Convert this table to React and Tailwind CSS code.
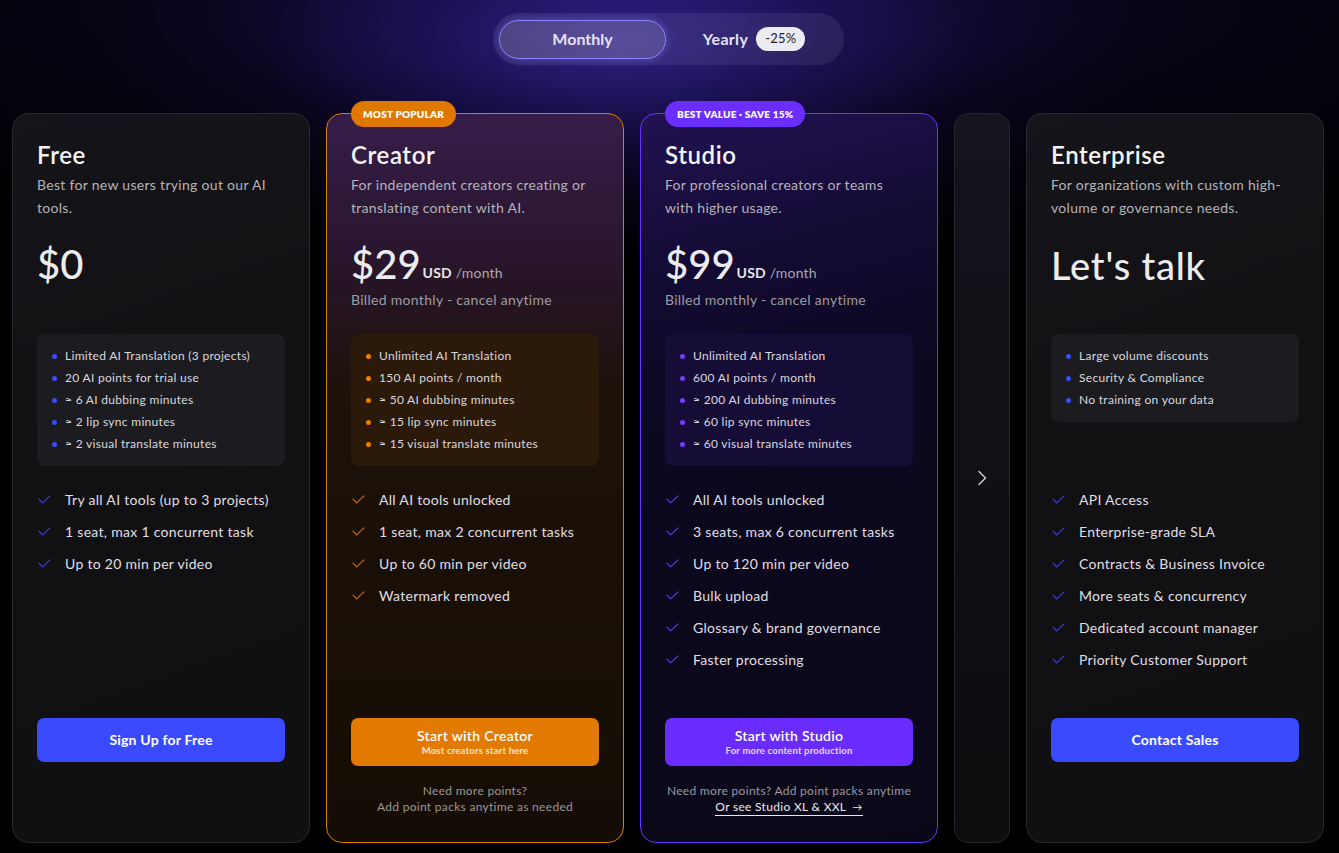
import React from "react";

const Check = ({ color }) => (
  <svg width="13" height="9" viewBox="0 0 13 9" fill="none" className="shrink-0">
    <path d="M1 4.2 L4.6 7.8 L12 0.8" stroke={color} strokeWidth="1.1" strokeLinecap="round" strokeLinejoin="round" />
  </svg>
);

const plans = [
  {
    key: "free",
    title: "Free",
    desc: "Best for new users trying out our AI tools.",
    price: "$0",
    billed: "",
    box: [
      "Limited AI Translation (3 projects)",
      "20 AI points for trial use",
      "≈ 6 AI dubbing minutes",
      "≈ 2 lip sync minutes",
      "≈ 2 visual translate minutes",
    ],
    checks: ["Try all AI tools (up to 3 projects)", "1 seat, max 1 concurrent task", "Up to 20 min per video"],
  },
  {
    key: "creator",
    title: "Creator",
    desc: "For independent creators creating or translating content with AI.",
    price: "$29",
    billed: "Billed monthly - cancel anytime",
    box: [
      "Unlimited AI Translation",
      "150 AI points / month",
      "≈ 50 AI dubbing minutes",
      "≈ 15 lip sync minutes",
      "≈ 15 visual translate minutes",
    ],
    checks: ["All AI tools unlocked", "1 seat, max 2 concurrent tasks", "Up to 60 min per video", "Watermark removed"],
  },
  {
    key: "studio",
    title: "Studio",
    desc: "For professional creators or teams with higher usage.",
    price: "$99",
    billed: "Billed monthly - cancel anytime",
    box: [
      "Unlimited AI Translation",
      "600 AI points / month",
      "≈ 200 AI dubbing minutes",
      "≈ 60 lip sync minutes",
      "≈ 60 visual translate minutes",
    ],
    checks: [
      "All AI tools unlocked",
      "3 seats, max 6 concurrent tasks",
      "Up to 120 min per video",
      "Bulk upload",
      "Glossary & brand governance",
      "Faster processing",
    ],
  },
];

const themes = {
  free: {
    card: "border-[#29292d] bg-[linear-gradient(160deg,#15141a_0%,#111113_40%,#101012_100%)]",
    box: "bg-[#1c1c20]",
    dot: "bg-[#3b4bff]",
    check: "#3446e8",
  },
  creator: {
    card: "border-[#e07a00] bg-[linear-gradient(180deg,#361d49_0%,#2a1630_18%,#1d1109_38%,#150d05_100%)]",
    box: "bg-[#2b1a0a]",
    dot: "bg-[#ea8000]",
    check: "#cf7000",
  },
  studio: {
    card: "border-[#6633ff] bg-[linear-gradient(165deg,#221252_0%,#140b35_20%,#0c0820_40%,#0a0818_100%)]",
    box: "bg-[#160d36]",
    dot: "bg-[#7a3cff]",
    check: "#6a35ff",
  },
};

function BoxList({ items, t }) {
  return (
    <div className={`mt-[24px] rounded-[8px] pl-[15px] pr-[10px] py-[11px] ${t.box}`}>
      {items.map((b) => (
        <div key={b} className="flex items-center gap-[8px] h-[22px] text-[12px] tracking-[0.3px] text-[#d9d8de]">
          <span className={`w-[5px] h-[5px] rounded-full shrink-0 ${t.dot}`} />
          <span>{b}</span>
        </div>
      ))}
    </div>
  );
}

function CheckList({ items, t, mt }) {
  return (
    <div className={`${mt} flex-1`}>
      {items.map((c) => (
        <div key={c} className="flex items-center h-[32px] text-[14px] tracking-[0.3px] text-[#e0dfe4]">
          <span className="w-[28px] pl-[1px]">
            <Check color={t.check} />
          </span>
          <span>{c}</span>
        </div>
      ))}
    </div>
  );
}

function Card({ plan }) {
  const t = themes[plan.key];
  return (
    <div className={`relative w-[298px] h-[730px] shrink-0 rounded-[16px] border px-6 pt-[26px] flex flex-col ${t.card}`}>
      {plan.key === "creator" && (
        <div className="absolute -top-[13px] left-6 h-[26px] px-3 rounded-full bg-[#e07800] flex items-center text-[10px] font-extrabold tracking-[0.2px] text-white">
          MOST POPULAR
        </div>
      )}
      {plan.key === "studio" && (
        <div className="absolute -top-[13px] left-6 h-[26px] px-3 rounded-full bg-[#6a2fff] flex items-center text-[10px] font-extrabold tracking-[0.2px] text-white">
          BEST VALUE · SAVE 15%
        </div>
      )}
      <div className="text-[24px] leading-[30px] font-semibold tracking-[0.6px] text-[#f4f4f6]">{plan.title}</div>
      <div className="mt-[3px] h-[46px] text-[14px] leading-[23px] tracking-[0.3px] text-[#b4b3b8] pr-3">{plan.desc}</div>
      <div className="mt-[23px] h-[48px] flex items-end gap-[2px] pb-[2px]">
        <span className="text-[40px] leading-[48px] font-medium text-[#ececee]">{plan.price}</span>
        {plan.price !== "$0" && (
          <span className="text-[14px] leading-[30px] tracking-[0.2px] text-[#a9a8ae]">
            <span className="font-bold text-[#e6e6e8]">USD</span> /month
          </span>
        )}
      </div>
      <div className="h-[20px] text-[14px] leading-[20px] tracking-[0.3px] text-[#9d9ca2]">{plan.billed}</div>
      <BoxList items={plan.box} t={t} />
      <CheckList items={plan.checks} t={t} mt="mt-[17px]" />
      <div className="h-[124px]">
        {plan.key === "free" && (
          <button className="w-full h-[44px] rounded-[7px] bg-[#3a4bff] text-white text-[14px] font-bold tracking-[0.2px] pb-[1px]">
            Sign Up for Free
          </button>
        )}
        {plan.key === "creator" && (
          <>
            <button className="w-full h-[48px] rounded-[7px] bg-[#e27a00] text-white flex flex-col items-center justify-center">
              <span className="text-[14px] leading-[17px] font-semibold tracking-[0.3px]">Start with Creator</span>
              <span className="text-[9.5px] leading-[13px] font-bold tracking-[0.2px] text-white/80">Most creators start here</span>
            </button>
            <div className="mt-[17px] text-center text-[12px] leading-[16px] tracking-[0.3px] text-[#9a9797]">
              <div>Need more points?</div>
              <div>Add point packs anytime as needed</div>
            </div>
          </>
        )}
        {plan.key === "studio" && (
          <>
            <button className="w-full h-[48px] rounded-[7px] bg-[#6a2bff] text-white flex flex-col items-center justify-center">
              <span className="text-[14px] leading-[17px] font-semibold tracking-[0.3px]">Start with Studio</span>
              <span className="text-[9.5px] leading-[13px] font-bold tracking-[0.2px] text-white/80">For more content production</span>
            </button>
            <div className="mt-[17px] text-center text-[12px] leading-[16px] tracking-[0.3px] text-[#9a99a0]">
              <div>Need more points? Add point packs anytime</div>
              <div className="flex justify-center">
                <span className="border-b border-[#e8e8ec] text-[#ececf0] leading-[15px]">
                  Or see Studio XL &amp; XXL <span className="ml-[3px] text-[10px]">→</span>
                </span>
              </div>
            </div>
          </>
        )}
      </div>
    </div>
  );
}

function Enterprise() {
  const t = themes.free;
  const box = ["Large volume discounts", "Security & Compliance", "No training on your data"];
  const checks = [
    "API Access",
    "Enterprise-grade SLA",
    "Contracts & Business Invoice",
    "More seats & concurrency",
    "Dedicated account manager",
    "Priority Customer Support",
  ];
  return (
    <div className={`w-[298px] h-[730px] shrink-0 rounded-[16px] border px-6 pt-[26px] flex flex-col ${t.card}`}>
      <div className="text-[24px] leading-[30px] font-semibold tracking-[0.6px] text-[#f4f4f6]">Enterprise</div>
      <div className="mt-[3px] h-[46px] text-[14px] leading-[23px] tracking-[0.3px] text-[#b4b3b8] pr-1">
        For organizations with custom high-volume or governance needs.
      </div>
      <div className="mt-[23px] h-[48px] flex items-end pb-[1px]">
        <span className="text-[38px] leading-[48px] font-medium tracking-[0.8px] text-[#ececee]">Let's talk</span>
      </div>
      <div className="h-[20px]" />
      <BoxList items={box} t={t} />
      <CheckList items={checks} t={t} mt="mt-[61px]" />
      <div className="h-[124px]">
        <button className="w-full h-[44px] rounded-[7px] bg-[#3a4bff] text-white text-[14px] font-bold tracking-[0.2px] pb-[1px]">
          Contact Sales
        </button>
      </div>
    </div>
  );
}

export default function App() {
  return (
    <div
      className="relative w-full min-h-[853px] bg-black overflow-hidden"
      style={{ fontFamily: "Lato, 'Open Sans', sans-serif" }}
    >
      <div className="absolute inset-0 bg-[radial-gradient(ellipse_520px_200px_at_620px_40px,rgba(72,58,210,0.75)_0%,rgba(50,34,160,0.45)_40%,rgba(30,14,80,0.2)_70%,transparent_100%)]" />
      <div className="absolute inset-0 bg-[radial-gradient(ellipse_1100px_260px_at_660px_0px,rgba(40,20,110,0.55)_0%,rgba(20,10,60,0.3)_50%,transparent_100%)]" />
      <div className="relative">
        <div className="flex justify-center pt-[13px]">
          <div className="w-[351px] h-[52px] rounded-full bg-white/[0.07] pl-[6px] pr-[6px] flex items-center ml-[-2px]">
            <div className="w-[167px] h-[39px] rounded-full border border-[#8b86ff] bg-white/[0.14] shadow-[0_0_8px_rgba(140,130,255,0.45)] flex items-center justify-center text-[16px] font-bold text-[#e4e2f6]">
              Monthly
            </div>
            <div className="flex-1 flex items-center justify-center gap-[8px] pl-[4px]">
              <span className="text-[16px] font-bold tracking-[0.3px] text-[#e4e2f6]">Yearly</span>
              <span className="h-[24px] px-[9px] rounded-full bg-[#ecebf2] text-[#1c1c22] text-[13px] tracking-[0.2px] flex items-center">-25%</span>
            </div>
          </div>
        </div>
        <div className="mt-[48px] flex gap-4 pl-3">
          {plans.map((p) => (
            <Card key={p.key} plan={p} />
          ))}
          <div className="w-[56px] h-[730px] shrink-0 rounded-[14px] border border-[#26252c] bg-[linear-gradient(180deg,#16141f_0%,#101016_30%,#0e0e11_100%)] flex items-center justify-center">
            <svg width="10" height="16" viewBox="0 0 10 16" fill="none">
              <path d="M2 1.5 L8.5 8 L2 14.5" stroke="#d0d0d6" strokeWidth="1.4" strokeLinecap="round" strokeLinejoin="round" />
            </svg>
          </div>
          <Enterprise />
        </div>
      </div>
    </div>
  );
}
